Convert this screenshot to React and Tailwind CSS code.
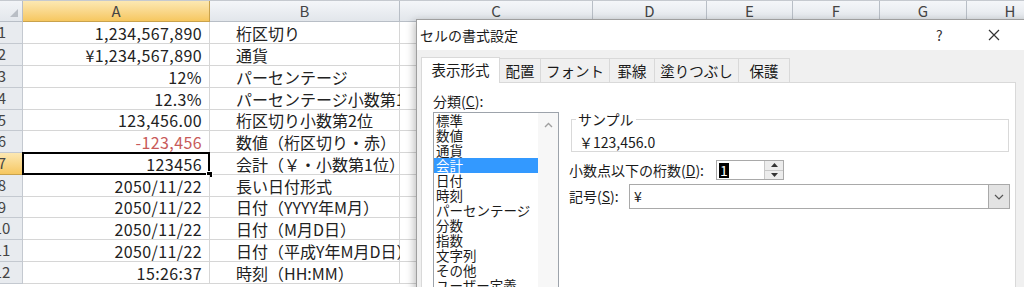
import React from 'react';

const COLS = [
  { label: 'A', w: 'w-[187px]', sel: true },
  { label: 'B', w: 'w-[190px]' },
  { label: 'C', w: 'w-[193px]' },
  { label: 'D', w: 'w-[114px]' },
  { label: 'E', w: 'w-[86px]' },
  { label: 'F', w: 'w-[87px]' },
  { label: 'G', w: 'w-[87px]' },
  { label: 'H', w: 'w-[87px]' },
];

const ROWS = [
  { n: 1, h: 'h-[22px]', a: '1,234,567,890', b: '桁区切り' },
  { n: 2, h: 'h-[22px]', a: '¥1,234,567,890', b: '通貨' },
  { n: 3, h: 'h-[22px]', a: '12%', b: 'パーセンテージ' },
  { n: 4, h: 'h-[22px]', a: '12.3%', b: 'パーセンテージ小数第1位' },
  { n: 5, h: 'h-[21px]', a: '123,456.00', b: '桁区切り小数第2位' },
  { n: 6, h: 'h-[22px]', a: '-123,456', b: '数値（桁区切り・赤）', red: true },
  { n: 7, h: 'h-[22px]', a: '123456', b: '会計（￥・小数第1位）', sel: true },
  { n: 8, h: 'h-[22px]', a: '2050/11/22', b: '長い日付形式' },
  { n: 9, h: 'h-[21px]', a: '2050/11/22', b: '日付（YYYY年M月）' },
  { n: 10, h: 'h-[22px]', a: '2050/11/22', b: '日付（M月D日）' },
  { n: 11, h: 'h-[22px]', a: '2050/11/22', b: '日付（平成Y年M月D日）' },
  { n: 12, h: 'h-[22px]', a: '15:26:37', b: '時刻（HH:MM）' },
];

const TABS = [
  { label: '表示形式', w: 'w-[79px]', active: true },
  { label: '配置', w: 'w-[42px]' },
  { label: 'フォント', w: 'w-[70px]' },
  { label: '罫線', w: 'w-[46px]' },
  { label: '塗りつぶし', w: 'w-[85px]' },
  { label: '保護', w: 'w-[52px]' },
];

const CATEGORIES = ['標準', '数値', '通貨', '会計', '日付', '時刻', 'パーセンテージ', '分数', '指数', '文字列', 'その他', 'ユーザー定義'];

function Sheet() {
  return (
    <div className="flex flex-col">
      {/* column headers */}
      <div className="flex h-[22px] border-t border-[#c5c9cf]">
        <div className="relative w-[23px] shrink-0 border-r border-b border-[#b8bec6] bg-gradient-to-b from-[#f2f4f7] to-[#e3e7ec]">
          <svg className="absolute left-[10px] top-[8px]" width="8" height="8" viewBox="0 0 8 8">
            <path d="M8 0 L8 8 L0 8 Z" fill="#b9bec5" />
          </svg>
        </div>
        {COLS.map((c) => (
          <div
            key={c.label}
            className={`${c.w} shrink-0 flex items-center justify-center border-r border-b text-[15px] text-[#444] ${
              c.sel
                ? 'border-[#c9a24c] bg-gradient-to-b from-[#fce8b2] to-[#f6c75f]'
                : 'border-[#b8bec6] bg-gradient-to-b from-[#f4f6f9] to-[#e2e6eb]'
            }`}
          >
            {c.label}
          </div>
        ))}
      </div>

      {ROWS.map((r) => (
        <div key={r.n} className={`flex ${r.h}`}>
          {/* row header, left side scrolled out of view */}
          <div
            className={`w-[23px] shrink-0 overflow-hidden border-r border-b ${
              r.sel
                ? 'border-[#c9a24c] bg-gradient-to-b from-[#fce8b2] to-[#f6c75f]'
                : 'border-[#c4c9d0] bg-[#e8ebef]'
            }`}
          >
            <div className="-ml-[18px] w-[40px] h-full flex items-center justify-center text-[15px] text-[#444]">
              {r.n}
            </div>
          </div>
          <div className="relative w-[187px] shrink-0 flex items-center justify-end pr-[7px] border-r border-b border-[#d6d6d6] bg-white">
            <span className={`text-[16px] tracking-[0.4px] ${r.red ? 'text-[#c85a5a]' : 'text-[#222]'}`}>{r.a}</span>
            {r.sel && (
              <>
                <div className="absolute -left-[1px] -top-[1px] -right-[1px] -bottom-[1px] border-2 border-black" />
                <div className="absolute -right-[4px] -bottom-[4px] w-[7px] h-[7px] bg-black border border-white" />
              </>
            )}
          </div>
          <div className="w-[190px] shrink-0 flex items-center pl-[26px] border-r border-b border-[#d6d6d6] bg-white whitespace-nowrap overflow-visible">
            <span className="text-[16px] text-[#222]">{r.b}</span>
          </div>
          <div className="w-[193px] shrink-0 border-r border-b border-[#d6d6d6] bg-white" />
          <div className="w-[114px] shrink-0 border-r border-b border-[#d6d6d6] bg-white" />
          <div className="w-[86px] shrink-0 border-r border-b border-[#d6d6d6] bg-white" />
          <div className="w-[87px] shrink-0 border-r border-b border-[#d6d6d6] bg-white" />
          <div className="w-[87px] shrink-0 border-r border-b border-[#d6d6d6] bg-white" />
          <div className="w-[87px] shrink-0 border-r border-b border-[#d6d6d6] bg-white" />
        </div>
      ))}
    </div>
  );
}

function FormatDialog() {
  return (
    <div className="absolute left-[416px] top-[19px] w-[640px] h-[300px] flex flex-col border border-[#9f9f9f] bg-[#f0f0f0] shadow-[-2px_2px_8px_rgba(0,0,0,0.25)] text-[#1a1a1a]">
      {/* title bar */}
      <div className="h-[30px] shrink-0 flex items-center bg-white pl-[3px]">
        <span className="text-[14px]">セルの書式設定</span>
        <span className="ml-[418px] text-[14px] text-[#333]">?</span>
        <svg className="ml-[45px]" width="12" height="12" viewBox="0 0 12 12">
          <path d="M1 1 L11 11 M11 1 L1 11" stroke="#333" strokeWidth="1.2" />
        </svg>
      </div>

      {/* tabs */}
      <div className="flex items-end pl-[4px] pt-[7px]">
        {TABS.map((t) => (
          <div
            key={t.label}
            className={`${t.w} flex items-center justify-center text-[14.5px] border-t border-l border-r border-[#d9d9d9] -mr-px ${
              t.active ? 'h-[26px] bg-white relative z-10 -mb-px pb-[2px]' : 'h-[24px] bg-[#f0f0f0]'
            }`}
          >
            {t.label}
          </div>
        ))}
      </div>

      {/* tab panel */}
      <div className="ml-[4px] w-[595px] flex-1 bg-white border border-[#d9d9d9] pl-[11px] pt-[9px]">
        <div className="text-[14px] leading-[18px]">
          分類(<span className="underline">C</span>):
        </div>
        <div className="flex mt-[2px]">
          {/* category list */}
          <div className="w-[126px] h-[200px] shrink-0 flex border border-[#9da3ab]">
            <div className="flex-1 flex flex-col">
              {CATEGORIES.map((c) => (
                <div
                  key={c}
                  className={`text-[13.5px] leading-[15px] pl-[2px] whitespace-nowrap ${c === '会計' ? 'bg-[#3399ff] text-white' : ''}`}
                >
                  {c}
                </div>
              ))}
            </div>
            <div className="w-[20px] shrink-0 bg-[#f7f7f7] flex justify-center pt-[9px]">
              <svg width="9" height="6" viewBox="0 0 9 6">
                <path d="M1 5 L4.5 1.5 L8 5" stroke="#a0a0a0" strokeWidth="1.4" fill="none" />
              </svg>
            </div>
          </div>

          {/* right side */}
          <div className="ml-[10px] flex flex-col">
            <div className="relative ml-[2px] mt-[7px] w-[438px] h-[33px] border border-[#d9d9d9] pl-[7px] pt-[13px]">
              <span className="absolute -top-[10px] left-[4px] bg-white px-[2px] text-[14px] leading-[18px]">サンプル</span>
              <div className="text-[14px] leading-[18px]">￥123,456.0</div>
            </div>

            <div className="flex items-center mt-[8px] h-[20px]">
              <div className="w-[147px] text-[14px] whitespace-nowrap">
                小数点以下の桁数(<span className="underline">D</span>):
              </div>
              <div className="w-[68px] h-[20px] flex border border-[#a9a9a9]">
                <div className="flex-1 flex items-center pl-[2px]">
                  <span className="bg-black text-white text-[14px] leading-[15px] px-[1px]">1</span>
                </div>
                <div className="w-[19px] flex flex-col border-l border-[#c8c8c8]">
                  <div className="flex-1 flex items-center justify-center bg-[#ececec] border-b border-[#c8c8c8]">
                    <svg width="7" height="4" viewBox="0 0 7 4"><path d="M0 4 L3.5 0 L7 4 Z" fill="#333" /></svg>
                  </div>
                  <div className="flex-1 flex items-center justify-center bg-[#ececec]">
                    <svg width="7" height="4" viewBox="0 0 7 4"><path d="M0 0 L3.5 4 L7 0 Z" fill="#333" /></svg>
                  </div>
                </div>
              </div>
            </div>

            <div className="flex items-center mt-[4px] h-[25px]">
              <div className="w-[60px] text-[14px] whitespace-nowrap">
                記号(<span className="underline">S</span>):
              </div>
              <div className="w-[381px] h-[25px] flex border border-[#a9a9a9] bg-white">
                <div className="flex-1 flex items-center pl-[4px] text-[14px]">¥</div>
                <div className="w-[21px] flex items-center justify-center bg-[#e3e3e3] border-l border-[#a9a9a9]">
                  <svg width="10" height="6" viewBox="0 0 10 6">
                    <path d="M1 1 L5 5 L9 1" stroke="#555" strokeWidth="1.2" fill="none" />
                  </svg>
                </div>
              </div>
            </div>
          </div>
        </div>
      </div>
    </div>
  );
}

export default function App() {
  return (
    <div className="relative w-[1024px] h-[287px] overflow-hidden bg-white font-['Noto_Sans_CJK_JP','Liberation_Sans',sans-serif]">
      <Sheet />
      <FormatDialog />
    </div>
  );
}
